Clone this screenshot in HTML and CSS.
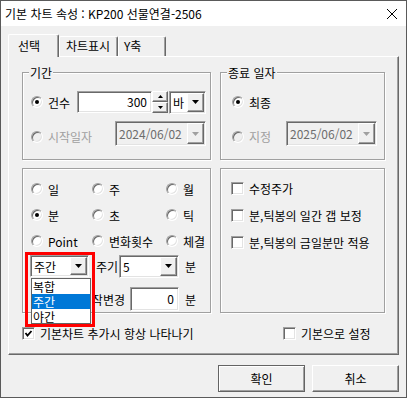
FILE: index.html
```html
<!DOCTYPE html>
<html lang="ko">
<head>
    <meta charset="UTF-8">
    <title>기본 차트 속성</title>
    <link rel="stylesheet" href="styles.css">
</head>
<body>
<div class="window">
    <div class="titlebar">
        <span class="title">기본 차트 속성 : KP200 선물연결-2506</span>
        <svg class="close" width="10" height="10" viewBox="0 0 10 10"><path d="M0 0L10 10M10 0L0 10" stroke="#000" stroke-width="1"/></svg>
    </div>

    <div class="dialog">
        <div class="tabs">
            <div class="tab active">선택</div>
            <div class="tab tab-chart">차트표시</div>
            <div class="tab tab-y">Y축</div>
        </div>

        <div class="panel">
            <div class="groups">
                <!-- 기간 -->
                <div class="group period">
                    <span class="group-title">기간</span>
                    <div class="row">
                        <label class="radio w-count"><span class="dot on"></span>건수</label>
                        <div class="edit count">300</div>
                        <div class="spinner">
                            <span class="spin-btn"><svg width="5" height="3"><path d="M2.5 0L5 3H0z"/></svg></span>
                            <span class="spin-btn"><svg width="5" height="3"><path d="M0 0H5L2.5 3z"/></svg></span>
                        </div>
                        <div class="combo unit">
                            <span class="combo-text">바</span>
                            <span class="drop"><svg width="7" height="4"><path d="M0 0H7L3.5 4z"/></svg></span>
                        </div>
                    </div>
                    <div class="row row-date">
                        <label class="radio off w-start"><span class="dot"></span>시작일자</label>
                        <div class="combo date off">
                            <span class="combo-text">2024/06/02</span>
                            <span class="drop"><svg width="7" height="4"><path d="M0 0H7L3.5 4z"/></svg></span>
                        </div>
                    </div>
                </div>

                <!-- 종료 일자 -->
                <div class="group end">
                    <span class="group-title">종료 일자</span>
                    <div class="row">
                        <label class="radio"><span class="dot on"></span>최종</label>
                    </div>
                    <div class="row row-date">
                        <label class="radio off w-fix"><span class="dot"></span>지정</label>
                        <div class="combo date off">
                            <span class="combo-text">2025/06/02</span>
                            <span class="drop"><svg width="7" height="4"><path d="M0 0H7L3.5 4z"/></svg></span>
                        </div>
                    </div>
                </div>

                <!-- 주기 종류 -->
                <div class="group kind">
                    <div class="kind-grid">
                        <label class="radio"><span class="dot"></span>일</label>
                        <label class="radio"><span class="dot"></span>주</label>
                        <label class="radio"><span class="dot"></span>월</label>
                        <label class="radio"><span class="dot on"></span>분</label>
                        <label class="radio"><span class="dot"></span>초</label>
                        <label class="radio"><span class="dot"></span>틱</label>
                        <label class="radio"><span class="dot"></span>Point</label>
                        <label class="radio"><span class="dot"></span>변화횟수</label>
                        <label class="radio"><span class="dot"></span>체결</label>
                    </div>
                    <div class="combo-row">
                        <div class="combo session">
                            <span class="combo-text">주간</span>
                            <span class="drop"><svg width="7" height="4"><path d="M0 0H7L3.5 4z"/></svg></span>
                        </div>
                        <span class="lbl cycle-lbl">주기</span>
                        <div class="combo cycle">
                            <span class="combo-text">5</span>
                            <span class="drop"><svg width="7" height="4"><path d="M0 0H7L3.5 4z"/></svg></span>
                        </div>
                        <span class="lbl min">분</span>
                    </div>
                    <div class="start-row">
                        <span class="lbl start-lbl">시작변경</span>
                        <div class="edit zero">0</div>
                        <span class="lbl min">분</span>
                    </div>

                    <div class="mark"></div>
                    <div class="droplist">
                        <div class="opt">복합</div>
                        <div class="opt sel">주간</div>
                        <div class="opt">야간</div>
                    </div>
                </div>

                <!-- 옵션 -->
                <div class="group opts">
                    <label class="check"><span class="box"></span>수정주가</label>
                    <label class="check"><span class="box"></span>분,틱봉의 일간 갭 보정</label>
                    <label class="check"><span class="box"></span>분,틱봉의 금일분만 적용</label>
                </div>
            </div>

            <div class="foot">
                <label class="check keep"><span class="box"><svg width="9" height="9"><path d="M1.5 4L3.5 6.5L7.5 2" fill="none" stroke="#000" stroke-width="1.8"/></svg></span>기본차트 추가시 항상 나타나기</label>
                <label class="check"><span class="box"></span>기본으로 설정</label>
            </div>
        </div>

        <div class="actions">
            <button class="btn default">확인</button>
            <button class="btn">취소</button>
        </div>
    </div>
</div>
</body>
</html>
```

FILE: styles.css
```css
* {
    box-sizing: border-box;
}
body {
    margin: 0;
    background-color: #f0f0f0;
    font-family: "Noto Sans CJK KR", "Liberation Sans", sans-serif;
    font-size: 12px;
    line-height: 15px;
    color: #000;
}
.window {
    width: 407px;
    height: 398px;
    border: 1px solid #5a5a5a;
    background-color: #f0f0f0;
}
.titlebar {
    height: 25px;
    background-color: #fff;
    display: flex;
    align-items: center;
    padding-left: 4px;
}
.title {
    flex: 1;
    line-height: 16px;
}
.close {
    margin-right: 9px;
}
.dialog {
    padding: 8px 7px 0 7px;
}

/* tabs */
.tabs {
    display: flex;
    align-items: flex-end;
    height: 22px;
}
.tab {
    height: 20px;
    width: 51px;
    padding: 1px 0 0 6px;
    line-height: 16px;
    border: 1px solid #fff;
    border-bottom: none;
    border-right-color: #696969;
    box-shadow: inset -1px 0 #a0a0a0;
    border-radius: 2px 2px 0 0;
    white-space: nowrap;
}
.tab.active {
    position: relative;
    z-index: 1;
    height: 23px;
    margin-bottom: -1px;
    padding: 3px 0 0 9px;
    background-color: #f0f0f0;
}
.tab-chart {
    width: 59px;
}
.tab-y {
    width: 48px;
    padding-left: 5px;
}

.panel {
    height: 299px;
    border: 1px solid;
    border-color: #fff #696969 #696969 #fff;
    box-shadow: inset -1px -1px #a0a0a0;
    padding: 15px 13px 0 13px;
}
.groups {
    display: grid;
    grid-template-columns: 189px 165px;
    grid-template-rows: 88px 145px;
    gap: 8px 9px;
}
.group {
    position: relative;
    border: 1px solid #a0a0a0;
    box-shadow: inset 1px 1px #fff, 1px 1px #fff;
}
.group-title {
    position: absolute;
    top: -8px;
    left: 6px;
    padding: 0 1px;
    background-color: #f0f0f0;
}
.row {
    display: flex;
    align-items: center;
    height: 22px;
}
.row-date {
    height: 25px;
    margin-top: 8px;
}
.row-date .radio {
    margin-top: 6px;
}
.period {
    padding: 18px 0 0 8px;
}
.end {
    padding: 18px 0 0 11px;
}

/* radio + checkbox */
.radio, .check {
    display: flex;
    align-items: center;
    white-space: nowrap;
}
.radio.off {
    color: #a0a0a0;
}
.w-count { width: 46px; }
.w-start { width: 84px; }
.w-fix { width: 54px; }
.dot {
    width: 12px;
    height: 12px;
    margin-right: 5px;
    border-radius: 50%;
    border: 1px solid;
    border-color: #a0a0a0 #fff #fff #a0a0a0;
    background-color: #fff;
    box-shadow: inset 1px 1px #696969, inset -1px -1px #e3e3e3;
    display: flex;
    align-items: center;
    justify-content: center;
    flex-shrink: 0;
}
.off .dot {
    background-color: #f0f0f0;
}
.dot.on::after {
    content: "";
    width: 4px;
    height: 4px;
    border-radius: 50%;
    background-color: #000;
}
.box {
    width: 13px;
    height: 13px;
    margin-right: 5px;
    border: 1px solid;
    border-color: #a0a0a0 #fff #fff #a0a0a0;
    background-color: #fff;
    box-shadow: inset 1px 1px #696969, inset -1px -1px #e3e3e3;
    display: flex;
    align-items: center;
    justify-content: center;
    flex-shrink: 0;
}

/* edit / combo */
.edit, .combo {
    border: 1px solid;
    border-color: #a0a0a0 #fff #fff #a0a0a0;
    box-shadow: inset 1px 1px #696969, inset -1px -1px #e3e3e3;
    background-color: #fff;
    padding: 1px;
}
.edit {
    text-align: right;
    padding-right: 4px;
    line-height: 18px;
}
.count {
    width: 75px;
    height: 22px;
}
.spinner {
    display: flex;
    flex-direction: column;
    width: 16px;
    height: 22px;
}
.spin-btn {
    height: 11px;
    border: 1px solid;
    border-color: #fff #696969 #696969 #fff;
    box-shadow: inset -1px -1px #a0a0a0;
    display: flex;
    align-items: center;
    justify-content: center;
}
.combo {
    display: flex;
}
.combo-text {
    flex: 1;
    padding-left: 2px;
    display: flex;
    align-items: center;
    white-space: nowrap;
    overflow: hidden;
}
.drop {
    width: 17px;
    border: 1px solid;
    border-color: #fff #696969 #696969 #fff;
    box-shadow: inset -1px -1px #a0a0a0;
    background-color: #f0f0f0;
    display: flex;
    align-items: center;
    justify-content: center;
}
.unit {
    width: 37px;
    height: 23px;
    margin-left: 1px;
}
.date {
    width: 91px;
    height: 25px;
}
.combo.off {
    background-color: #f0f0f0;
    color: #6d6d6d;
}
.combo.off .drop {
    fill: #a0a0a0;
}

/* kind group */
.kind {
    padding: 7px 0 0 8px;
}
.kind-grid {
    display: grid;
    grid-template-columns: 61px 74px 1fr;
    grid-auto-rows: 26px;
    align-items: center;
}
.combo-row {
    display: flex;
    align-items: center;
    height: 22px;
    margin-top: 1px;
}
.session {
    width: 59px;
    height: 22px;
    margin-left: -1px;
}
.cycle-lbl {
    width: 23px;
    margin-left: 7px;
    white-space: nowrap;
    overflow: hidden;
}
.cycle {
    width: 60px;
    height: 23px;
}
.min {
    margin-left: 6px;
}
.start-row {
    display: flex;
    align-items: center;
    height: 24px;
    margin-top: 10px;
}
.start-lbl {
    width: 94px;
    text-align: right;
}
.zero {
    width: 49px;
    height: 24px;
    margin-left: 5px;
    line-height: 20px;
}
.mark {
    position: absolute;
    left: 2px;
    top: 83px;
    width: 70px;
    height: 75px;
    border: 3px solid #f00;
    z-index: 3;
}
.droplist {
    position: absolute;
    left: 8px;
    top: 109px;
    width: 60px;
    height: 46px;
    border: 1px solid #646464;
    background-color: #fff;
    z-index: 2;
}
.opt {
    height: 15px;
    line-height: 15px;
    padding-left: 1px;
}
.opt.sel {
    background-color: #0078d7;
    color: #fff;
}

/* options group */
.opts {
    display: grid;
    grid-auto-rows: 27px;
    align-content: start;
    padding: 6px 0 0 10px;
}

.foot {
    display: flex;
    align-items: center;
    height: 15px;
    margin-top: 13px;
}
.keep {
    width: 261px;
}

.actions {
    display: flex;
    justify-content: flex-end;
    gap: 7px;
    margin-top: 10px;
}
.btn {
    width: 87px;
    height: 27px;
    font: inherit;
    color: #000;
    background-color: #f0f0f0;
    border: 1px solid;
    border-color: #fff #696969 #696969 #fff;
    box-shadow: inset -1px -1px #a0a0a0;
    padding: 0;
}
.btn.default {
    border-color: #646464;
    box-shadow: inset 1px 1px #fff, inset -1px -1px #a0a0a0;
}
```
